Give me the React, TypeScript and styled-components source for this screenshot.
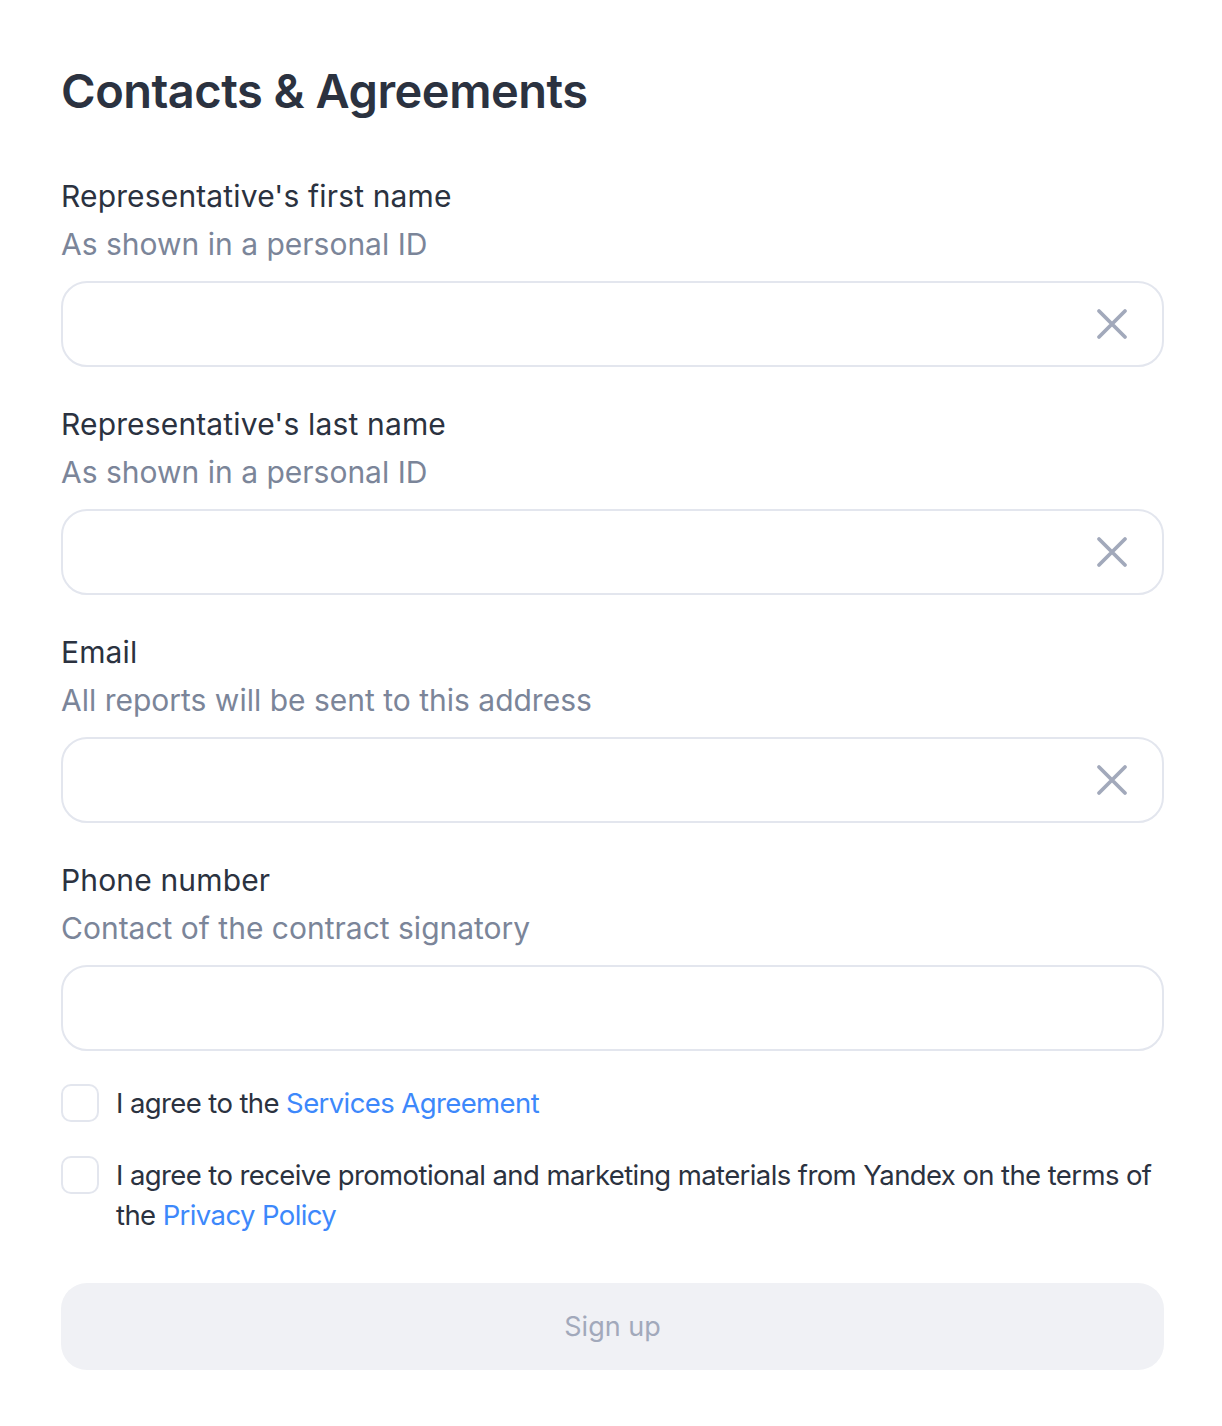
import React from "react";
import styled, { createGlobalStyle } from "styled-components";

const Global = createGlobalStyle`
  html, body { margin: 0; padding: 0; background: #ffffff; }
  body { font-family: Inter, "Noto Sans", sans-serif; -webkit-font-smoothing: antialiased; }
  * { box-sizing: border-box; }
`;

const Page = styled.div`
  padding: 62px 58px 40px 61px;
  display: flex;
  flex-direction: column;
  color: #2b3240;
`;

const Title = styled.h1`
  margin: 0 0 52px;
  font-size: 47px;
  line-height: 58px;
  font-weight: 600;
  letter-spacing: -0.5px;
  color: #2b3240;
`;

const Field = styled.div<{ $last?: boolean }>`
  display: flex;
  flex-direction: column;
  margin-bottom: ${(p) => (p.$last ? 0 : 33)}px;
`;

const Label = styled.div`
  font-size: 30px;
  line-height: 48px;
  letter-spacing: 0.15px;
  color: #2b3240;
`;

const Hint = styled.div`
  font-size: 30px;
  line-height: 48px;
  color: #7b8599;
  margin-bottom: 13px;
`;

const InputBox = styled.div`
  height: 86px;
  border: 2px solid #e3e6ee;
  border-radius: 26px;
  display: flex;
  align-items: center;
  justify-content: flex-end;
  padding: 0 33px;
`;

const ClearIcon = () => (
  <svg width="34" height="34" viewBox="0 0 34 34" fill="none">
    <path d="M4 4 L30 30 M30 4 L4 30" stroke="#a2a9bb" strokeWidth="3.8" strokeLinecap="round" />
  </svg>
);

const CheckRow = styled.label<{ $mt: number }>`
  display: flex;
  align-items: flex-start;
  gap: 17px;
  margin-top: ${(p) => p.$mt}px;
  font-size: 27.5px;
  line-height: 40px;
  letter-spacing: -0.6px;
  color: #2b3240;
`;

const Box = styled.span`
  flex: 0 0 auto;
  width: 38px;
  height: 38px;
  margin-top: 1px;
  border: 2px solid #e3e6ee;
  border-radius: 10px;
`;

const Link = styled.a`
  color: #3d88fb;
  text-decoration: none;
`;

const Button = styled.button`
  margin-top: 48px;
  height: 87px;
  border: none;
  border-radius: 26px;
  background: #f0f1f5;
  color: #a2a9bb;
  font-family: inherit;
  font-size: 27px;
`;

const fields = [
  { label: "Representative's first name", hint: "As shown in a personal ID", clear: true },
  { label: "Representative's last name", hint: "As shown in a personal ID", clear: true },
  { label: "Email", hint: "All reports will be sent to this address", clear: true },
  { label: "Phone number", hint: "Contact of the contract signatory", clear: false },
];

export default function App() {
  return (
    <>
      <Global />
      <Page>
        <Title>Contacts &amp; Agreements</Title>
        {fields.map((f, i) => (
          <Field key={i} $last={i === fields.length - 1}>
            <Label>{f.label}</Label>
            <Hint>{f.hint}</Hint>
            <InputBox>{f.clear && <ClearIcon />}</InputBox>
          </Field>
        ))}
        <CheckRow $mt={32}>
          <Box />
          <span>
            I agree to the <Link href="#">Services Agreement</Link>
          </span>
        </CheckRow>
        <CheckRow $mt={32}>
          <Box />
          <span>
            I agree to receive promotional and marketing materials from Yandex on the terms of the{" "}
            <Link href="#">Privacy Policy</Link>
          </span>
        </CheckRow>
        <Button>Sign up</Button>
      </Page>
    </>
  );
}
